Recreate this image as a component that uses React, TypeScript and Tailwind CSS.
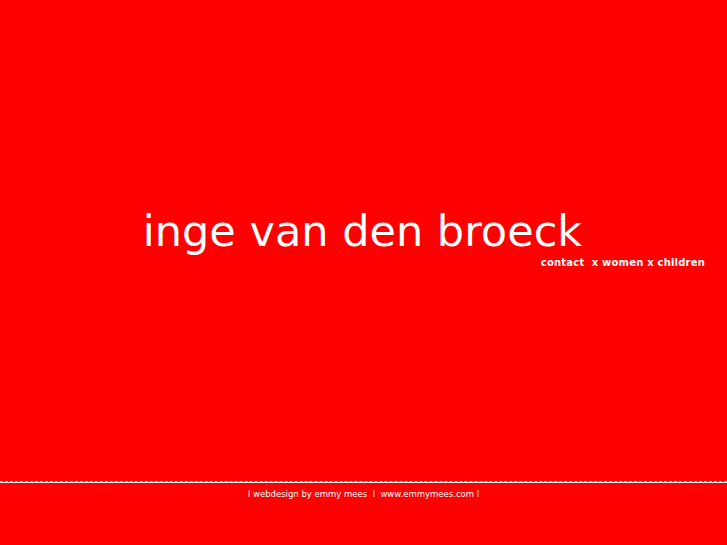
export default function App() {
  return (
    <div className="h-[545px] w-full bg-[#ff0000] text-white flex flex-col font-['DejaVu_Sans',sans-serif] overflow-hidden">
      <div className="h-[207px]" />
      <div className="flex justify-center">
        <h1 className="text-[43px] leading-[48px] pr-[2px]">inge van den broeck</h1>
      </div>
      <div className="flex justify-end pr-[22px] mt-[1px]">
        <nav className="text-[10px] font-bold tracking-[0.2px] leading-[14px]">
          contact&nbsp; x women x children
        </nav>
      </div>
      <div className="flex-1" />
      <div className="border-t border-dashed border-[#ffb0b0]" />
      <div className="h-px bg-white" />
      <div className="flex justify-center pt-[5px] h-[62px]">
        <p className="text-[8.5px] leading-[12px]">l webdesign by emmy mees&nbsp; l&nbsp; www.emmymees.com l</p>
      </div>
    </div>
  );
}
